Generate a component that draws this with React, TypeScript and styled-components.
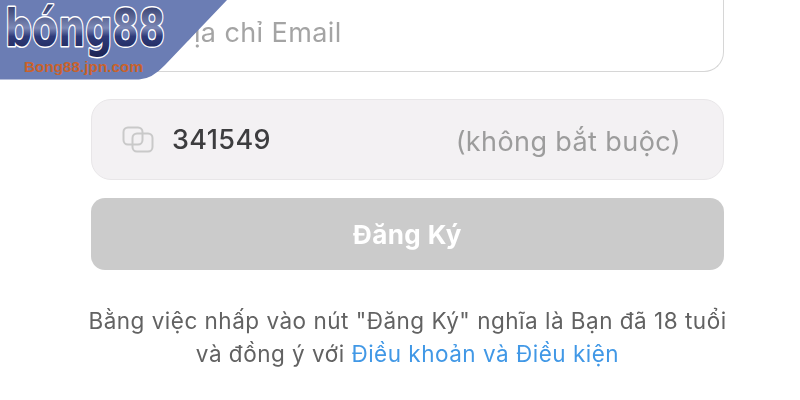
import React, { FC } from "react";
import styled, { createGlobalStyle } from "styled-components";

const GlobalStyle = createGlobalStyle`
  html, body {
    margin: 0;
    padding: 0;
    background: #fff;
  }
`;

const CodeIcon: FC = () => (
  <SCodeIcon viewBox="0 0 32 27" fill="none" stroke="#c9c9c9" strokeWidth="2">
    <rect x="1.5" y="1.5" width="19" height="17" rx="4.5" />
    <rect x="10.5" y="7.5" width="20" height="18" rx="4.5" />
  </SCodeIcon>
);

const Logo: FC = () => (
  <SLogo>
    <svg width="228" height="80" viewBox="0 0 228 80">
      <defs>
        <linearGradient id="logoFill" x1="0" y1="0" x2="0" y2="1">
          <stop offset="0" stopColor="#1f2858" />
          <stop offset="0.5" stopColor="#7d89b6" />
          <stop offset="0.64" stopColor="#2f3b79" />
          <stop offset="1" stopColor="#1b2252" />
        </linearGradient>
      </defs>
      <path d="M0 0H227L165 65Q152 79 139 79.5H0Z" fill="#6b7db4" />
      <text
        x="5"
        y="46"
        fontFamily="DejaVu Sans, Liberation Sans, sans-serif"
        fontWeight="700"
        fontSize="52"
        textLength="160"
        lengthAdjust="spacingAndGlyphs"
        fill="url(#logoFill)"
        stroke="#fff"
        strokeWidth="3"
        paintOrder="stroke"
        strokeLinejoin="round"
      >
        bóng88
      </text>
      <text
        x="24"
        y="72"
        fontFamily="Liberation Sans, Arial, sans-serif"
        fontWeight="700"
        fontSize="15"
        textLength="119"
        lengthAdjust="spacingAndGlyphs"
        fill="#c9622c"
      >
        Bong88.jpn.com
      </text>
    </svg>
  </SLogo>
);

const App: FC = () => (
  <>
    <GlobalStyle />
    <SPage>
      <Logo />
      <SForm>
        <SEmailField>
          <SPlaceholder>Địa chỉ Email</SPlaceholder>
        </SEmailField>
        <SCodeField>
          <CodeIcon />
          <SCodeValue>341549</SCodeValue>
          <SOptional>(không bắt buộc)</SOptional>
        </SCodeField>
        <SSubmit type="button">Đăng Ký</SSubmit>
        <STerms>
          <span>Bằng việc nhấp vào nút "Đăng Ký" nghĩa là Bạn đã 18 tuổi</span>
          <span>
            và đồng ý với <STermsLink>Điều khoản và Điều kiện</STermsLink>
          </span>
        </STerms>
      </SForm>
    </SPage>
  </>
);

const SPage = styled.div`
  position: relative;
  width: 800px;
  height: 400px;
  overflow: hidden;
  background: #fff;
  font-family: Inter, "Liberation Sans", Arial, sans-serif;
`;

const SLogo = styled.div`
  position: absolute;
  z-index: 1;
  top: 0;
  left: 0;
  line-height: 0;
`;

const SForm = styled.div`
  display: flex;
  flex-direction: column;
  width: 633px;
  margin-left: 91px;
  filter: blur(0.5px);
`;

const SEmailField = styled.div`
  display: flex;
  align-items: center;
  box-sizing: border-box;
  height: 72px;
  padding: 0 0 6px 82px;
  border: 1px solid #d6d6d6;
  border-top: none;
  border-radius: 0 0 20px 20px;
  margin-bottom: 27px;
`;

const SPlaceholder = styled.span`
  font-size: 27px;
  letter-spacing: 0.4px;
  color: #a4a4a4;
`;

const SCodeField = styled.div`
  display: flex;
  align-items: center;
  box-sizing: border-box;
  height: 81px;
  padding: 0 42px 0 30px;
  background: #f3f1f3;
  border: 1px solid #e8e6e8;
  border-radius: 20px;
  margin-bottom: 18px;
`;

const SCodeIcon = styled.svg`
  flex: none;
  width: 32px;
  height: 27px;
  margin-right: 18px;
`;

const SCodeValue = styled.span`
  flex: 1;
  font-size: 27px;
  font-weight: 500;
  letter-spacing: 0.4px;
  color: #3d3d3f;
`;

const SOptional = styled.span`
  padding-top: 4px;
  font-size: 27px;
  letter-spacing: 0.4px;
  color: #9c9c9c;
`;

const SSubmit = styled.button`
  box-sizing: border-box;
  height: 72px;
  padding: 0;
  border: none;
  border-radius: 14px;
  background: #cbcbcb;
  color: #fff;
  font-family: inherit;
  font-size: 26px;
  font-weight: 700;
  letter-spacing: 0.4px;
  margin-bottom: 34px;
`;

const STerms = styled.div`
  display: flex;
  flex-direction: column;
  align-items: center;
  font-size: 22.5px;
  line-height: 33px;
  letter-spacing: 0.5px;
  white-space: nowrap;
  color: #626262;
`;

const STermsLink = styled.span`
  color: #4198e6;
`;

export default App;
